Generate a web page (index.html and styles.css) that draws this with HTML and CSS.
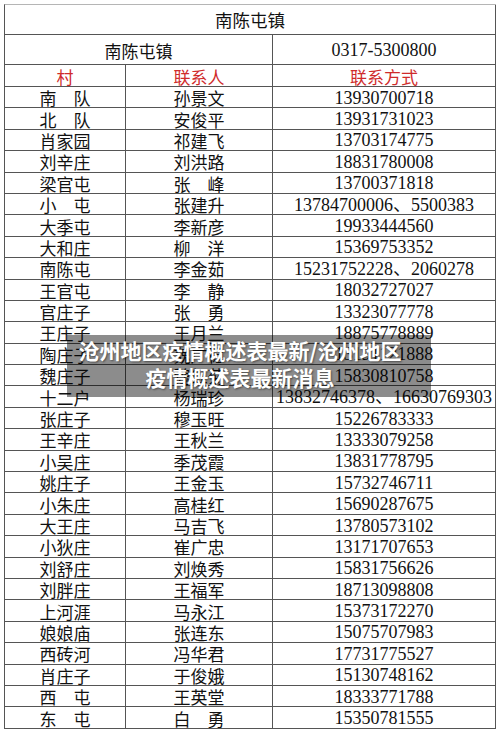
FILE: index.html
```html
<!DOCTYPE html>
<html lang="zh-CN">
<head>
<meta charset="utf-8">
<title>南陈屯镇</title>
<link rel="stylesheet" href="styles.css">
</head>
<body>
<div class="page">
  <div class="sheet">
    <div class="cell span3 cjk title">南陈屯镇</div>
    <div class="cell span2 cjk">南陈屯镇</div>
    <div class="cell num">0317-5300800</div>
    <div class="cell cjk red">村</div>
    <div class="cell cjk red">联系人</div>
    <div class="cell cjk red">联系方式</div>

    <div class="cell cjk">南　队</div><div class="cell cjk">孙景文</div><div class="cell num">13930700718</div>
    <div class="cell cjk">北　队</div><div class="cell cjk">安俊平</div><div class="cell num">13931731023</div>
    <div class="cell cjk">肖家园</div><div class="cell cjk">祁建飞</div><div class="cell num">13703174775</div>
    <div class="cell cjk">刘辛庄</div><div class="cell cjk">刘洪路</div><div class="cell num">18831780008</div>
    <div class="cell cjk">梁官屯</div><div class="cell cjk">张　峰</div><div class="cell num">13700371818</div>
    <div class="cell cjk">小　屯</div><div class="cell cjk">张建升</div><div class="cell num">13784700006、5500383</div>
    <div class="cell cjk">大季屯</div><div class="cell cjk">李新彦</div><div class="cell num">19933444560</div>
    <div class="cell cjk">大和庄</div><div class="cell cjk">柳　洋</div><div class="cell num">15369753352</div>
    <div class="cell cjk">南陈屯</div><div class="cell cjk">李金茹</div><div class="cell num">15231752228、2060278</div>
    <div class="cell cjk">王官屯</div><div class="cell cjk">李　静</div><div class="cell num">18032727027</div>
    <div class="cell cjk">官庄子</div><div class="cell cjk">张　勇</div><div class="cell num">13323077778</div>
    <div class="cell cjk">王庄子</div><div class="cell cjk">王月兰</div><div class="cell num">18875778889</div>
    <div class="cell cjk">陶庄子</div><div class="cell cjk">魏广稳</div><div class="cell num">13191121888</div>
    <div class="cell cjk">魏庄子</div><div class="cell cjk">魏红菊</div><div class="cell num">15830810758</div>
    <div class="cell cjk">十二户</div><div class="cell cjk">杨瑞珍</div><div class="cell num">13832746378、16630769303</div>
    <div class="cell cjk">张庄子</div><div class="cell cjk">穆玉旺</div><div class="cell num">15226783333</div>
    <div class="cell cjk">王辛庄</div><div class="cell cjk">王秋兰</div><div class="cell num">13333079258</div>
    <div class="cell cjk">小吴庄</div><div class="cell cjk">季茂霞</div><div class="cell num">13831778795</div>
    <div class="cell cjk">姚庄子</div><div class="cell cjk">王金玉</div><div class="cell num">15732746711</div>
    <div class="cell cjk">小朱庄</div><div class="cell cjk">高桂红</div><div class="cell num">15690287675</div>
    <div class="cell cjk">大王庄</div><div class="cell cjk">马吉飞</div><div class="cell num">13780573102</div>
    <div class="cell cjk">小狄庄</div><div class="cell cjk">崔广忠</div><div class="cell num">13171707653</div>
    <div class="cell cjk">刘舒庄</div><div class="cell cjk">刘焕秀</div><div class="cell num">15831756626</div>
    <div class="cell cjk">刘胖庄</div><div class="cell cjk">王福军</div><div class="cell num">18713098808</div>
    <div class="cell cjk">上河涯</div><div class="cell cjk">马永江</div><div class="cell num">15373172270</div>
    <div class="cell cjk">娘娘庙</div><div class="cell cjk">张连东</div><div class="cell num">15075707983</div>
    <div class="cell cjk">西砖河</div><div class="cell cjk">冯华君</div><div class="cell num">17731775527</div>
    <div class="cell cjk">肖庄子</div><div class="cell cjk">于俊娥</div><div class="cell num">15130748162</div>
    <div class="cell cjk">西　屯</div><div class="cell cjk">王英堂</div><div class="cell num">18333771788</div>
    <div class="cell cjk">东　屯</div><div class="cell cjk">白　勇</div><div class="cell num">15350781555</div>
  </div>
  <div class="caption">沧州地区疫情概述表最新/沧州地区<br>疫情概述表最新消息</div>
</div>
</body>
</html>
```
FILE: styles.css
```css
html, body {
  margin: 0;
  padding: 0;
  background: #ffffff;
}

.page {
  position: relative;
  width: 500px;
  height: 733px;
  overflow: hidden;
}

.sheet {
  margin: 4px 0 0 4px;
  width: 492px;
  display: grid;
  grid-template-columns: 121px 147px 223px;
  grid-template-rows: 30px 30px 22px repeat(30, 21.4px);
  border-left: 1px solid #555;
  border-top: 1px solid #b5b5b5;
  box-sizing: border-box;
  color: #111111;
}

.cell {
  box-sizing: border-box;
  border-right: 1px solid #555;
  border-bottom: 1px solid #555;
  display: flex;
  align-items: center;
  justify-content: center;
  white-space: nowrap;
  overflow: visible;
  line-height: 1;
}

.span3 { grid-column: span 3; }
.span2 { grid-column: span 2; }

.cjk {
  font-family: "Noto Sans CJK SC", "Liberation Serif", serif;
  font-size: 17px;
  font-weight: 400;
  padding-top: 1px;
}

.num {
  font-family: "Liberation Serif", "Noto Sans CJK SC", serif;
  font-size: 18px;
  padding-top: 1px;
}

.title {
  font-size: 17.5px;
}

.red {
  color: #cf2b2b;
}

.caption {
  position: absolute;
  left: 67px;
  top: 335px;
  width: 364px;
  height: 62px;
  box-sizing: border-box;
  padding: 2px 18px 0 0;
  background: rgba(0, 0, 0, 0.45);
  color: #ffffff;
  font-family: "Noto Sans CJK SC", sans-serif;
  font-weight: 700;
  font-size: 21px;
  line-height: 27px;
  text-align: center;
  text-shadow: 1px 1px 2px rgba(0, 0, 0, 0.45);
}
```
